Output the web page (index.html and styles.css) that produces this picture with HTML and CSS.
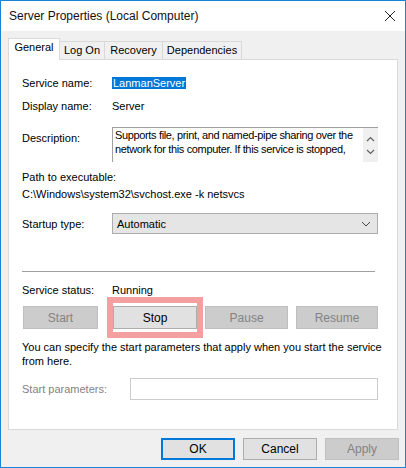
FILE: index.html
```html
<!DOCTYPE html>
<html lang="en">

<head>
    <meta charset="UTF-8">
    <title>Server Properties (Local Computer)</title>
    <link rel="stylesheet" href="styles.css">
</head>

<body>
    <div class="window">
        <div class="titlebar">
            <span class="title">Server Properties (Local Computer)</span>
            <svg class="close" width="12" height="12" viewBox="0 0 12 12">
                <path d="M1 1 L11 11 M11 1 L1 11" stroke="#222" stroke-width="1" fill="none" />
            </svg>
        </div>

        <div class="body">
            <div class="tabs">
                <div class="tab active">General</div>
                <div class="tab log">Log On</div>
                <div class="tab rec">Recovery</div>
                <div class="tab dep">Dependencies</div>
            </div>

            <div class="panel">
                <div class="row first">
                    <span class="label">Service name:</span>
                    <span class="value"><span class="selected">LanmanServer</span></span>
                </div>
                <div class="row gap7">
                    <span class="label">Display name:</span>
                    <span class="value">Server</span>
                </div>
                <div class="row desc-row">
                    <span class="label desc-label">Description:</span>
                    <div class="desc-box">
                        <div class="desc-text">Supports file, print, and named-pipe sharing over the network for this computer. If this service is stopped,</div>
                        <div class="scroll">
                            <svg width="9" height="6" viewBox="0 0 9 6"><path d="M1 5 L4.5 1.5 L8 5" stroke="#606060" stroke-width="1.2" fill="none" /></svg>
                            <svg width="9" height="6" viewBox="0 0 9 6"><path d="M1 1 L4.5 4.5 L8 1" stroke="#606060" stroke-width="1.2" fill="none" /></svg>
                        </div>
                    </div>
                </div>
                <div class="path-label">Path to executable:</div>
                <div class="path-value">C:\Windows\system32\svchost.exe -k netsvcs</div>
                <div class="row startup">
                    <span class="label">Startup type:</span>
                    <div class="combo">
                        <span>Automatic</span>
                        <svg width="10" height="6" viewBox="0 0 10 6"><path d="M1 1 L5 5 L9 1" stroke="#444" stroke-width="1" fill="none" /></svg>
                    </div>
                </div>

                <div class="separator"></div>

                <div class="row status">
                    <span class="label">Service status:</span>
                    <span class="value">Running</span>
                </div>
                <div class="service-buttons">
                    <button class="btn disabled start-btn">Start</button>
                    <div class="highlight">
                        <button class="btn stop-btn">Stop</button>
                    </div>
                    <button class="btn disabled pause-btn">Pause</button>
                    <button class="btn disabled resume-btn">Resume</button>
                </div>
                <p class="hint">You can specify the start parameters that apply when you start the service from here.</p>
                <div class="row params">
                    <span class="label gray">Start parameters:</span>
                    <div class="params-input"></div>
                </div>
            </div>

            <div class="footer">
                <button class="btn ok">OK</button>
                <button class="btn">Cancel</button>
                <button class="btn disabled">Apply</button>
            </div>
        </div>
    </div>
</body>

</html>
```

FILE: styles.css
```css
* {
    box-sizing: border-box;
}

body {
    margin: 0;
    font-family: "Liberation Sans", Arial, sans-serif;
    font-size: 11px;
    color: #000;
    background-color: #fff;
}

.window {
    width: 406px;
    height: 468px;
    border: 1px solid #1883d7;
    display: flex;
    flex-direction: column;
    overflow: hidden;
}

.titlebar {
    height: 30px;
    background-color: #fff;
    display: flex;
    align-items: center;
    justify-content: space-between;
    padding: 0 9px 0 8px;
}

.title {
    font-size: 12px;
    color: #111;
}

.body {
    flex: 1;
    background-color: #f0f0f0;
    padding-top: 7px;
}

.tabs {
    display: flex;
    align-items: flex-end;
    margin-left: 7px;
    height: 21px;
    position: relative;
    z-index: 1;
}

.tab {
    height: 18px;
    border: 1px solid #d9d9d9;
    border-bottom: none;
    border-left: none;
    background-color: #f0f0f0;
    font-size: 11px;
    line-height: 17px;
    text-align: center;
}

.tab.active {
    height: 22px;
    margin-bottom: -1px;
    border-left: 1px solid #d9d9d9;
    background-color: #fff;
    line-height: 17px;
    width: 52px;
}

.log {
    width: 45px;
}

.rec {
    width: 58px;
}

.dep {
    width: 79px;
}

.panel {
    margin-left: 7px;
    width: 390px;
    height: 371px;
    border: 1px solid #d9d9d9;
    background-color: #fff;
    padding: 0 19px 0 13px;
}

.row {
    display: flex;
    align-items: center;
    line-height: 16px;
}

.label {
    width: 90px;
    flex-shrink: 0;
}

.gray {
    color: #838383;
    width: 108px;
}

.first {
    margin-top: 15px;
}

.gap7 {
    margin-top: 7px;
}

.selected {
    display: inline-block;
    background-color: #0078d7;
    color: #fff;
    line-height: 12px;
    padding: 0 1px;
}

.desc-row {
    margin-top: 13px;
    align-items: flex-start;
}

.desc-label {
    padding-top: 3px;
}

.desc-box {
    width: 266px;
    height: 35px;
    border-top: 1px solid #a0a0a0;
    border-left: 1px solid #a0a0a0;
    display: flex;
}

.desc-text {
    flex: 1;
    padding: 0 2px 0 2px;
    line-height: 14px;
    letter-spacing: -0.35px;
    overflow: hidden;
}

.scroll {
    width: 15px;
    background-color: #f0f0f0;
    display: flex;
    flex-direction: column;
    align-items: center;
    justify-content: space-around;
    padding: 4px 0 3px;
}

.scroll svg {
    display: block;
}

.path-label {
    margin-top: 7px;
    line-height: 16px;
}

.path-value {
    margin-top: 1px;
    line-height: 16px;
}

.startup {
    margin-top: 11px;
}

.combo {
    width: 266px;
    height: 21px;
    border: 1px solid #acacac;
    background-color: #e5e5e5;
    display: flex;
    align-items: center;
    justify-content: space-between;
    padding: 0 6px 0 4px;
}

.separator {
    margin-top: 37px;
    width: 353px;
    border-top: 1px solid #a0a0a0;
}

.status {
    margin-top: 10px;
}

.service-buttons {
    display: flex;
    align-items: center;
    margin-top: 8px;
    height: 23px;
}

.btn {
    font-family: "Liberation Sans", Arial, sans-serif;
    font-size: 12px;
    height: 23px;
    background-color: #e1e1e1;
    border: 1px solid #adadad;
    color: #000;
    padding: 0;
    margin: 0;
}

.btn.disabled {
    background-color: #cccccc;
    border-color: #bfbfbf;
    color: #838383;
}

.start-btn {
    width: 76px;
    margin-left: 1px;
}

.highlight {
    margin-left: 9px;
    padding: 5px;
    border: 1px solid #f4a0a0;
    outline: 5px solid #f4a0a0;
    outline-offset: -6px;
    background-color: #fff;
    height: 41px;
    display: flex;
    align-items: center;
}

.stop-btn {
    width: 84px;
}

.pause-btn {
    margin-left: 2px;
    width: 84px;
}

.resume-btn {
    margin-left: 8px;
    width: 83px;
}

.hint {
    margin: 11px 0 0;
    line-height: 14px;
    width: 360px;
}

.params {
    margin-top: 10px;
}

.params-input {
    width: 248px;
    height: 22px;
    border: 1px solid #cccccc;
    background-color: #fff;
}

.footer {
    display: flex;
    justify-content: flex-end;
    gap: 8px;
    padding: 8px 6px 0 0;
}

.footer .btn {
    width: 74px;
    height: 22px;
}

.footer .btn.ok {
    border: 2px solid #0078d7;
}
```
